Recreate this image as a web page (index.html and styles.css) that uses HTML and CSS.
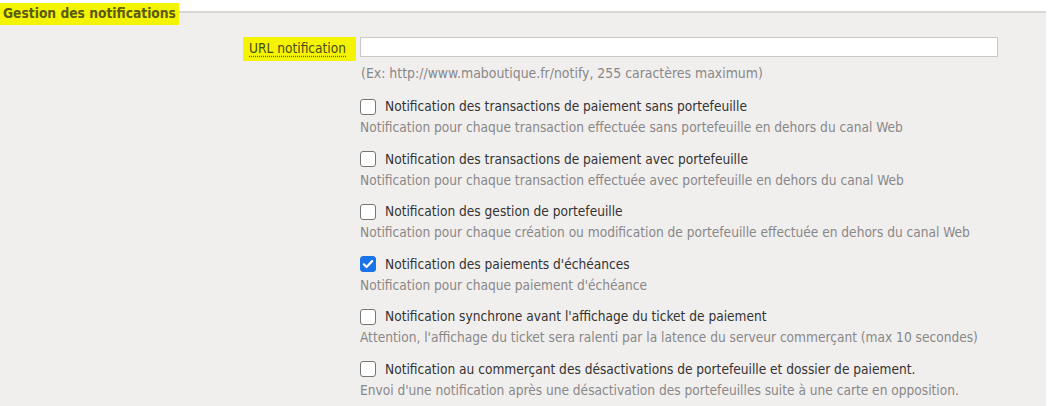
FILE: index.html
```html
<!DOCTYPE html>
<html lang="fr">
<head>
<meta charset="utf-8">
<title>Gestion des notifications</title>
<link rel="stylesheet" href="styles.css">
</head>
<body>
<fieldset class="panel">
  <legend class="legend"><span class="hl">Gestion des notifications</span></legend>
  <div class="form">
    <div class="row url-row">
      <div class="label-col"><label class="url-label" for="url">URL notification</label></div>
      <div class="field-col">
        <input id="url" class="url-input" type="text">
        <div class="hint">(Ex: http://www.maboutique.fr/notify, 255 caractères maximum)</div>
      </div>
    </div>
    <div class="row">
      <div class="label-col"></div>
      <div class="field-col options">
        <div class="opt">
          <label class="opt-main"><span class="cb"></span>Notification des transactions de paiement sans portefeuille</label>
          <div class="desc">Notification pour chaque transaction effectuée sans portefeuille en dehors du canal Web</div>
        </div>
        <div class="opt">
          <label class="opt-main"><span class="cb"></span>Notification des transactions de paiement avec portefeuille</label>
          <div class="desc">Notification pour chaque transaction effectuée avec portefeuille en dehors du canal Web</div>
        </div>
        <div class="opt">
          <label class="opt-main"><span class="cb"></span>Notification des gestion de portefeuille</label>
          <div class="desc">Notification pour chaque création ou modification de portefeuille effectuée en dehors du canal Web</div>
        </div>
        <div class="opt">
          <label class="opt-main"><span class="cb checked"><svg viewBox="0 0 16 16" width="16" height="16"><path d="M3.8 8.3 L6.6 11 L12.2 5" fill="none" stroke="#fff" stroke-width="2.2" stroke-linecap="round" stroke-linejoin="round"/></svg></span>Notification des paiements d'échéances</label>
          <div class="desc">Notification pour chaque paiement d'échéance</div>
        </div>
        <div class="opt">
          <label class="opt-main"><span class="cb"></span>Notification synchrone avant l'affichage du ticket de paiement</label>
          <div class="desc">Attention, l'affichage du ticket sera ralenti par la latence du serveur commerçant (max 10 secondes)</div>
        </div>
        <div class="opt">
          <label class="opt-main"><span class="cb"></span>Notification au commerçant des désactivations de portefeuille et dossier de paiement.</label>
          <div class="desc">Envoi d'une notification après une désactivation des portefeuilles suite à une carte en opposition.</div>
        </div>
      </div>
    </div>
  </div>
</fieldset>
</body>
</html>
```

FILE: styles.css
```css
html, body {
  margin: 0;
  padding: 0;
  background: #ffffff;
}
body {
  font-family: "DejaVu Sans Condensed", "DejaVu Sans", sans-serif;
  font-size: 13.6px;
  color: #333333;
  width: 1050px;
  height: 406px;
  overflow: hidden;
}
.panel {
  margin: 11px 4px 0 0;
  padding: 0 0 8px 0;
  border: 0;
  border-top: 2px solid #d8d5d5;
  background: #f1eeee;
  min-width: 0;
  position: relative;
}
.legend {
  position: absolute;
  top: -10px;
  left: 0;
  padding: 0;
  margin: 0;
}
.hl {
  display: inline-block;
  background: #f4f400;
  color: #5a5a10;
  font-weight: bold;
  font-size: 13.7px;
  padding: 1px 3px 3px 3px;
  line-height: 18px;
}
.form {
  padding-top: 24px;
}
.row {
  display: flex;
}
.label-col {
  width: 360px;
  display: flex;
  justify-content: flex-end;
  align-items: flex-start;
  flex: none;
}
.url-label {
  background: #f4f400;
  color: #4a4a20;
  padding: 3px 10px 5px 6px;
  margin-right: 4px;
  line-height: 16px;
  text-decoration: underline dotted #555;
  text-underline-offset: 3px;
}
.field-col {
  flex: none;
  width: 640px;
}
.url-input {
  display: block;
  box-sizing: border-box;
  width: 638px;
  height: 20px;
  margin: 0;
  border: 1px solid #c8c8c8;
  background: #fff;
  padding: 0 3px;
}
.hint {
  color: #888888;
  font-size: 13.9px;
  margin-top: 7px;
  line-height: 18px;
  padding-left: 1px;
}
.options {
  padding-top: 14px;
  width: 680px;
}
.opt {
  margin-bottom: 10.5px;
}
.opt:last-child {
  margin-bottom: 0;
}
.opt-main {
  display: flex;
  align-items: center;
  color: #333333;
  line-height: 21px;
  white-space: nowrap;
}
.cb {
  box-sizing: border-box;
  width: 16px;
  height: 16px;
  border: 1.5px solid #767676;
  border-radius: 3px;
  background: #fff;
  margin-right: 9px;
  flex: none;
  display: inline-flex;
}
.cb.checked {
  background: #1a73e8;
  border-color: #1a73e8;
}
.cb.checked svg {
  margin: -1.5px;
}
.desc {
  color: #888888;
  line-height: 21px;
  white-space: nowrap;
}
```
